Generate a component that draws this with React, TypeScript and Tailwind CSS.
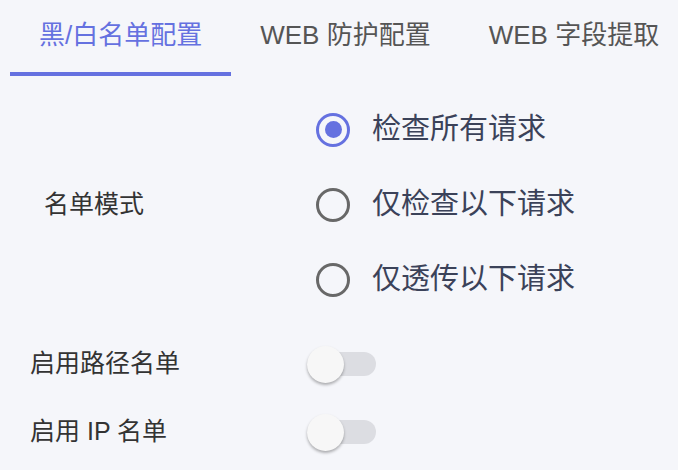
import React, { useState } from 'react';

const tabs = ['黑/白名单配置', 'WEB 防护配置', 'WEB 字段提取'];
const modes = ['检查所有请求', '仅检查以下请求', '仅透传以下请求'];

function Radio({ checked }: { checked: boolean }) {
    return (
        <span
            className={`flex items-center justify-center w-[34px] h-[34px] rounded-full border-[3.5px] ${checked ? 'border-[#6571e0]' : 'border-[#686868]'}`}
        >
            {checked && <span className="w-[17px] h-[17px] rounded-full bg-[#6571e0]" />}
        </span>
    );
}

function Toggle() {
    return (
        <div className="relative w-[70px] h-[37px] flex items-center">
            <div className="w-[69px] h-[24px] rounded-full bg-[#dcdde2]" />
            <div className="absolute left-0 top-0 w-[37px] h-[37px] rounded-full bg-[#f7f7f7] shadow-[0_2px_3px_rgba(0,0,0,0.3)]" />
        </div>
    );
}

const App: React.FC = () => {
    const [tab, setTab] = useState(0);
    const [mode, setMode] = useState(0);

    return (
        <div className="w-[678px] h-[470px] bg-[#f5f6fa] overflow-hidden font-['Liberation_Sans','Noto_Sans_CJK_SC',sans-serif]">
            <div className="flex pl-[10px] h-[76px]">
                {tabs.map((t, i) => (
                    <button
                        key={i}
                        onClick={() => setTab(i)}
                        className={`relative h-full px-[29px] pb-[6px] text-[26px] leading-none whitespace-nowrap ${tab === i ? 'text-[#6571e0]' : 'text-[#555555]'}`}
                    >
                        {t}
                        {tab === i && <span className="absolute left-0 right-0 bottom-0 h-[4px] bg-[#6571e0]" />}
                    </button>
                ))}
            </div>

            <div className="flex items-center mt-[16px]">
                <div className="w-[316px] pl-[44px] text-[25px] text-[#333333]">名单模式</div>
                <div className="flex flex-col">
                    {modes.map((m, i) => (
                        <div key={i} className="flex items-center gap-[22px] h-[75px] cursor-pointer" onClick={() => setMode(i)}>
                            <Radio checked={mode === i} />
                            <span className="text-[29px] text-[#3b4259]">{m}</span>
                        </div>
                    ))}
                </div>
            </div>

            <div className="flex flex-col mt-[13px]">
                <div className="flex items-center h-[68px]">
                    <div className="w-[307px] pl-[30px] text-[25px] text-[#333333]">启用路径名单</div>
                    <Toggle />
                </div>
                <div className="flex items-center h-[68px]">
                    <div className="w-[307px] pl-[30px] text-[25px] text-[#333333]">启用 IP 名单</div>
                    <Toggle />
                </div>
            </div>
        </div>
    );
};

export default App;
